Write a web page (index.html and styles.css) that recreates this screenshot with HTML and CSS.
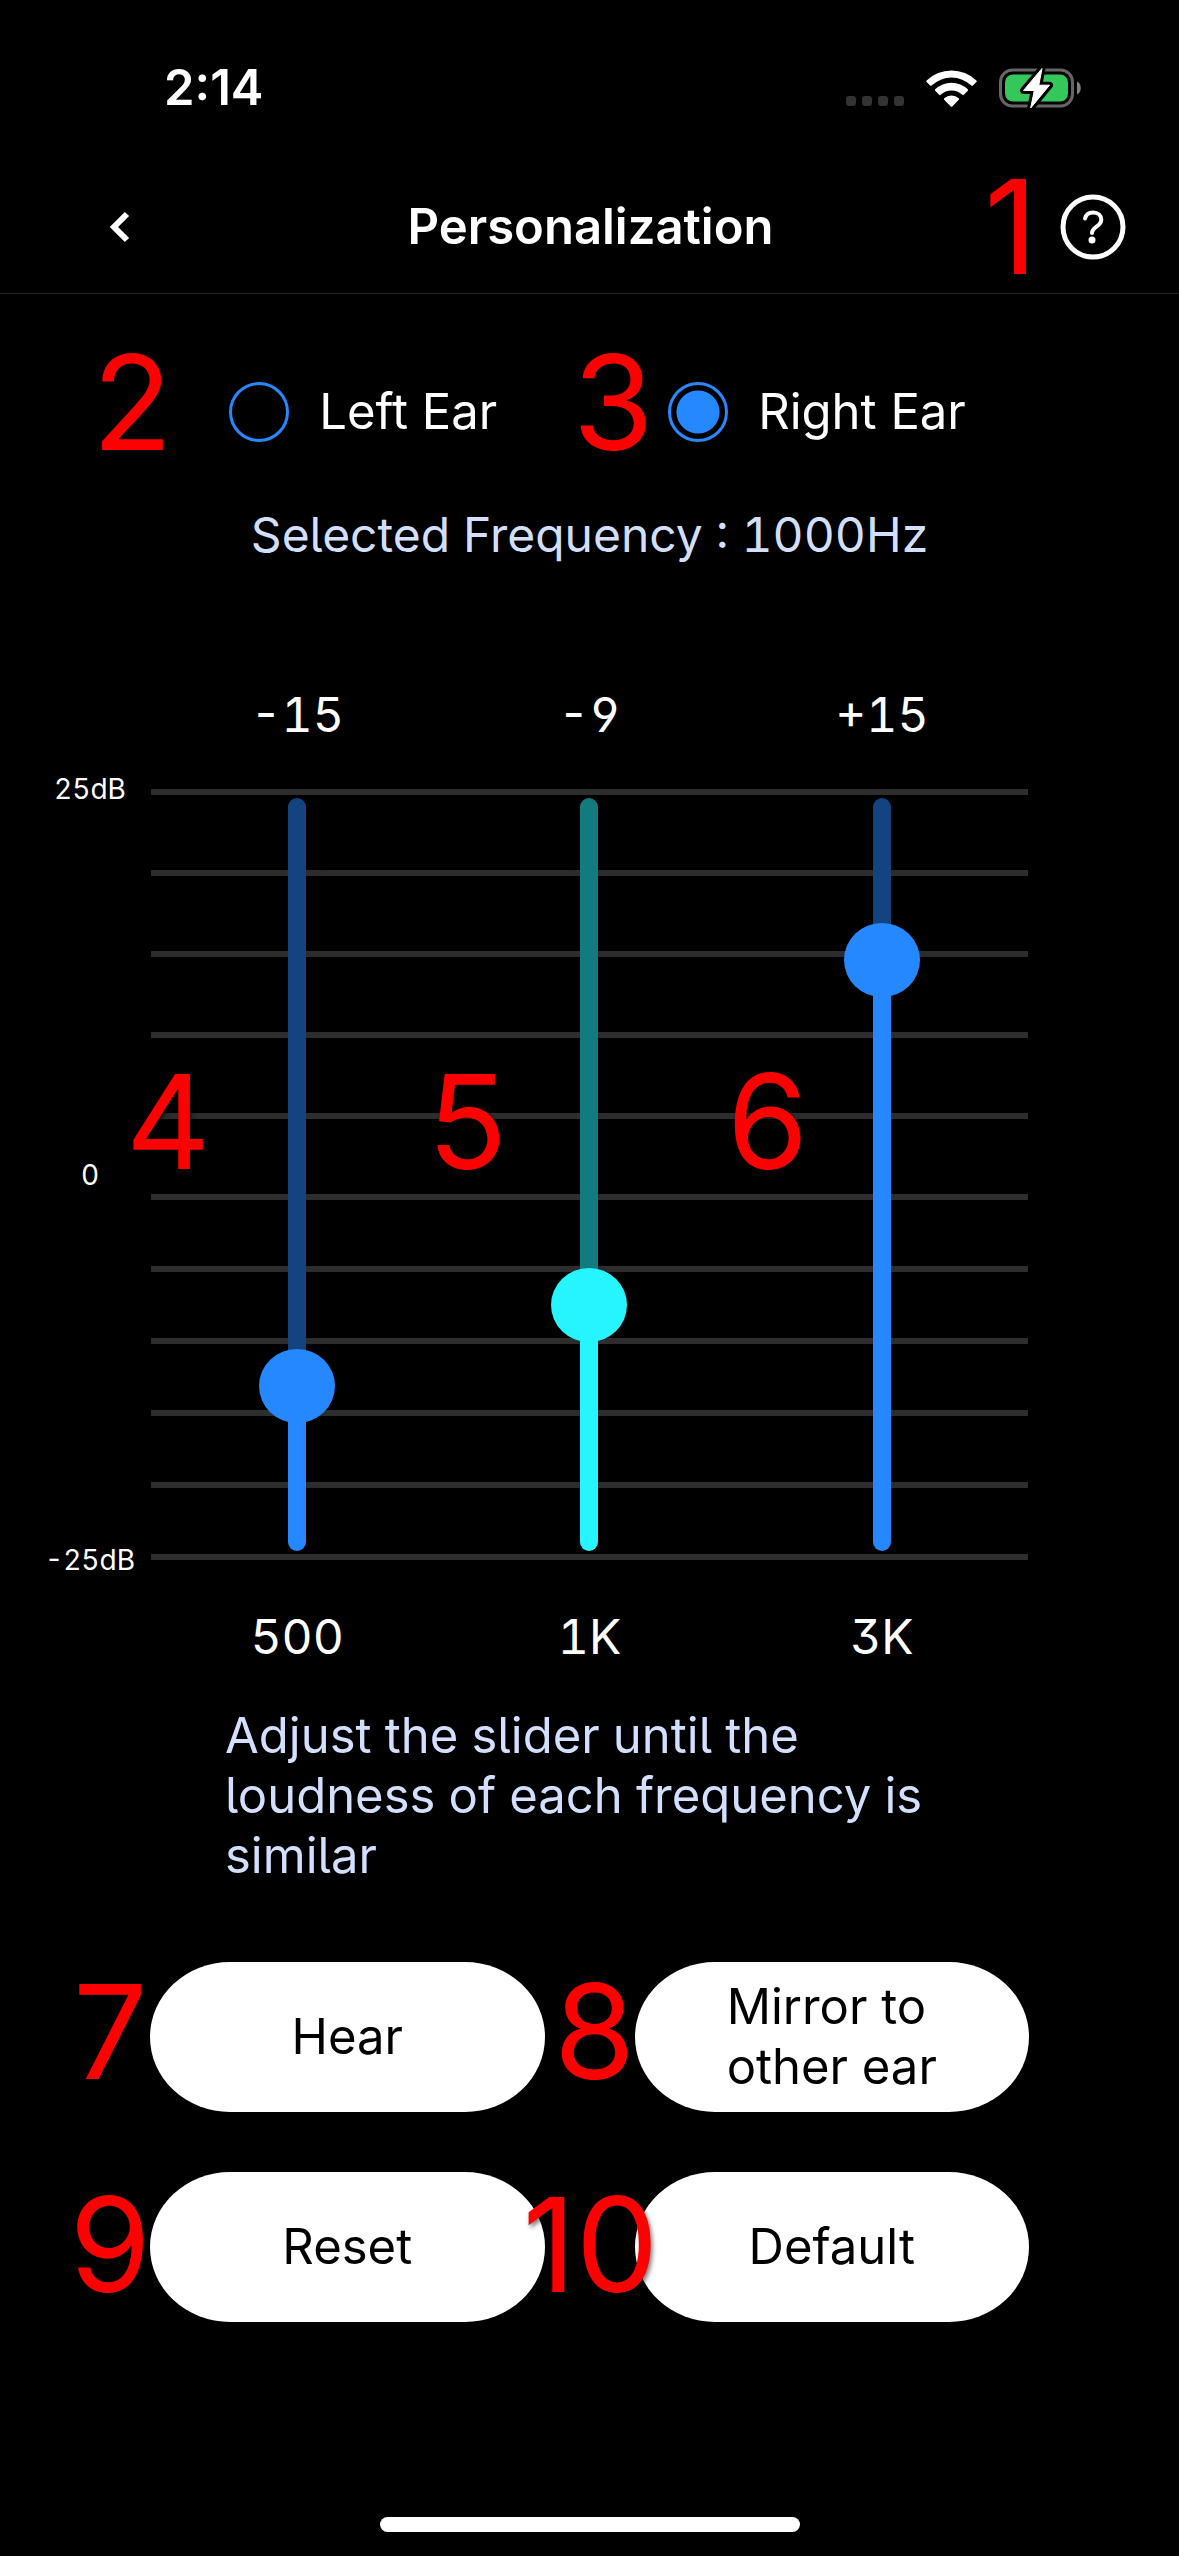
FILE: index.html
```html
<!DOCTYPE html>
<html lang="en">
<head>
<meta charset="utf-8">
<meta name="viewport" content="width=device-width, initial-scale=1">
<title>Personalization</title>
<link rel="stylesheet" href="styles.css">
</head>
<body>
<div class="status-bar">
  <time class="clock">2:14</time>
  <div class="status-icons">
    <svg class="signal" viewBox="0 0 58 10" aria-hidden="true">
      <rect width="10" height="10" rx="3"/><rect x="16" width="10" height="10" rx="3"/><rect x="32" width="10" height="10" rx="3"/><rect x="48" width="10" height="10" rx="3"/>
    </svg>
    <svg class="wifi" viewBox="0 0 51 38" aria-hidden="true">
      <path d="M0.6 11.6a35.6 35.6 0 0 1 49.8 0c.5.5.5 1 0 1.5L46.900 16.600c-.5.5-1 .5-1.500 0a28.700 28.700 0 0 0-39.800 0c-.5.5-1 .5-1.500 0L.6 13.100c-.5-.5-.5-1 0-1.500z"/>
      <path d="M9.200 20.300a23.500 23.500 0 0 1 32.600 0c.5.5.5 1 0 1.500l-4 4c-.5.5-1 .5-1.500 0a15.600 15.600 0 0 0-21.600 0c-.5.5-1 .5-1.500 0l-4-4c-.5-.5-.5-1 0-1.500z"/>
      <path d="M18.200 29.300a10.800 10.800 0 0 1 14.600 0c.5.5.5 1 0 1.500l-6.300 6.400c-.7.7-1.300.7-2 0l-6.300-6.400c-.5-.5-.5-1 0-1.500z"/>
    </svg>
    <svg class="battery" viewBox="0 0 82 43" aria-hidden="true">
      <rect x="1.500" y="3" width="72" height="36" rx="12" fill="none" stroke="#666" stroke-width="3"/>
      <path d="M78 14.500v13c5-1.500 5-11.500 0-13z" fill="#808080"/>
      <rect x="6" y="7.500" width="63" height="27" rx="8" fill="#34c759"/>
      <path d="M43 1.500 24.500 23.500h10.800L31.700 41 50.500 18.200H39.800z" fill="#fff" stroke="#000" stroke-width="7" stroke-linejoin="round"/>
      <path d="M43 1.500 24.500 23.500h10.800L31.700 41 50.500 18.200H39.800z" fill="#fff" stroke="#fff" stroke-width="1" stroke-linejoin="round"/>
    </svg>
  </div>
</div>

<header class="header">
  <button class="icon-button back" type="button" aria-label="Back">
    <svg class="chevron" viewBox="0 0 20 32" aria-hidden="true"><path d="M17 3 4 16l13 13"/></svg>
  </button>
  <h1 class="title">Personalization</h1>
  <button class="icon-button help" type="button" aria-label="Help">
    <svg class="question" viewBox="0 0 66 66" aria-hidden="true">
      <circle cx="33" cy="33" r="30"/>
      <path d="M25 24.500c1-4 4-6 8-6 5 0 8.300 3 8.300 7.200 0 6.800-9.300 7-9.300 13.300" stroke-width="4"/>
      <circle class="dot" cx="32" cy="46" r="3.500"/>
    </svg>
    <span class="marker marker-help">1</span>
  </button>
</header>

<main class="main">
  <div class="ears" role="radiogroup" aria-label="Ear">
    <label class="ear">
      <input class="radio" type="radio" name="ear" value="left">
      <span>Left Ear</span>
      <span class="marker marker-left">2</span>
    </label>
    <label class="ear">
      <input class="radio" type="radio" name="ear" value="right" checked>
      <span>Right Ear</span>
      <span class="marker marker-right">3</span>
    </label>
  </div>

  <p class="selected">Selected Frequency : 1000Hz</p>

  <section class="chart" aria-label="Loudness per frequency">
    <div class="axis"><span>25dB</span><span>0</span><span>-25dB</span></div>
    <div class="lines" aria-hidden="true">
      <i></i><i></i><i></i><i></i><i></i><i></i><i></i><i></i><i></i><i></i><i></i>
    </div>
    <div class="bands">
      <div class="band">
        <output for="band-500">-15</output>
        <div class="slider" style="--level: 22%">
          <div class="track"></div>
          <input class="range" id="band-500" type="range" min="-25" max="25" step="0.1" value="-14.9">
          <span class="marker marker-500">4</span>
        </div>
        <label class="frequency" for="band-500">500</label>
      </div>
      <div class="band active">
        <output for="band-1k">-9</output>
        <div class="slider" style="--level: 33%">
          <div class="track"></div>
          <input class="range" id="band-1k" type="range" min="-25" max="25" step="0.1" value="-9.2">
          <span class="marker marker-1k">5</span>
        </div>
        <label class="frequency" for="band-1k">1K</label>
      </div>
      <div class="band">
        <output for="band-3k">+15</output>
        <div class="slider" style="--level: 78%">
          <div class="track"></div>
          <input class="range" id="band-3k" type="range" min="-25" max="25" step="0.1" value="15.1">
          <span class="marker marker-3k">6</span>
        </div>
        <label class="frequency" for="band-3k">3K</label>
      </div>
    </div>
  </section>

  <p class="hint">Adjust the slider until the loudness of each frequency is similar</p>

  <div class="actions">
    <button class="action" type="button"><span>Hear</span><span class="marker marker-top">7</span></button>
    <button class="action" type="button"><span>Mirror to<br>other ear</span><span class="marker marker-top">8</span></button>
    <button class="action" type="button"><span>Reset</span><span class="marker marker-bottom">9</span></button>
    <button class="action" type="button"><span>Default</span><span class="marker marker-bottom wide">10</span></button>
  </div>
</main>

<div class="home-indicator"></div>
</body>
</html>
```
FILE: styles.css
```css
* { box-sizing: border-box; }

:root {
  --blue: #2688ff;
  --blue-dim: #13447f;
  --cyan: #26f5ff;
  --cyan-dim: #137a7f;
  --lilac: #d3dfff;
}

body {
  margin: 0;
  min-height: 100vh;
  display: flex;
  flex-direction: column;
  background: #000;
  color: #fff;
  font: 400 49px/60px Inter, "Liberation Sans", sans-serif;
}

button, input { font: inherit; color: inherit; margin: 0; }
p, h1 { margin: 0; }

.status-bar {
  height: 160px;
  padding: 16px 98px 0 164px;
  display: flex;
  align-items: center;
  justify-content: space-between;
}
.clock { font-size: 49px; font-weight: 600; }
.status-icons { display: flex; align-items: center; gap: 22px; }
.signal { width: 58px; height: 10px; fill: #333; align-self: flex-end; margin-bottom: 4px; }
.wifi { width: 51px; height: 38px; fill: #fff; }
.battery { width: 82px; height: 43px; }

.header {
  height: 134px;
  padding: 0 53px 0 90px;
  display: grid;
  grid-template-columns: 66px 1fr 66px;
  align-items: center;
  border-bottom: 1px solid #262626;
}
.title { font-size: 49px; line-height: 60px; font-weight: 600; text-align: center; padding-right: 35px; }
.icon-button {
  position: relative;
  width: 66px;
  height: 66px;
  padding: 0;
  border: 0;
  background: none;
  display: grid;
  place-items: center;
}
.chevron { width: 20px; height: 32px; fill: none; stroke: #fff; stroke-width: 6; }
.back { justify-items: start; padding-left: 20px; }
.question { width: 66px; height: 66px; fill: none; stroke: #fff; stroke-width: 5; stroke-linecap: round; }
.question .dot { fill: #fff; stroke: none; }

.main { display: flex; flex-direction: column; }

.ears {
  margin-top: 88px;
  padding-left: 16px;
  display: flex;
  justify-content: center;
  gap: 171px;
}
.ear { position: relative; display: flex; align-items: center; gap: 30px; }
.radio {
  appearance: none;
  width: 60px;
  height: 60px;
  border: 3px solid var(--blue);
  border-radius: 50%;
}
.radio:checked { background: radial-gradient(circle, var(--blue) 21px, transparent 22px); }

/* Tailed l, straight-legged 9 and flat-topped 3 */
.selected, .chart, .hint { font-feature-settings: "cv05", "cv04", "cv09", "tnum"; }
.selected, .chart { font-size: 48px; }

.selected { margin-top: 63px; text-align: center; color: var(--lilac); }

.chart {
  margin-top: 120px;
  display: grid;
  grid-template-columns: 151px 1fr 151px;
  grid-template-rows: 60px 807px 66px;
  row-gap: 26px;
}
.axis {
  grid-area: 2 / 1;
  padding-left: 29px;
  display: flex;
  flex-direction: column;
  justify-content: space-between;
  align-items: center;
  font-size: 28px;
  line-height: 36px;
}
.lines {
  grid-area: 2 / 2;
  padding: 18px 0;
  display: grid;
  grid-template-rows: repeat(5, 81px) repeat(5, 72px) 6px;
}
.lines i { height: 6px; background: #2d2d2d; }
.bands {
  grid-area: 1 / 2 / 4 / 3;
  display: grid;
  grid-template-columns: repeat(3, 1fr);
  text-align: center;
}
.band { display: flex; flex-direction: column; gap: 26px; --on: var(--blue); --off: var(--blue-dim); }
.band.active { --on: var(--cyan); --off: var(--cyan-dim); }
.frequency { line-height: 66px; }
.slider { position: relative; height: 807px; display: grid; place-items: center; }
.track {
  grid-area: 1 / 1;
  width: 18px;
  height: 753px;
  border-radius: 9px;
  background: linear-gradient(to top, var(--on) var(--level), var(--off) 0);
}
.range {
  grid-area: 1 / 1;
  appearance: none;
  writing-mode: vertical-lr;
  direction: rtl;
  width: 76px;
  height: 784px;
  background: none;
}
.range::-webkit-slider-thumb {
  appearance: none;
  width: 76px;
  height: 74px;
  border-radius: 50%;
  background: var(--on);
}

.hint { margin: 36px 225px 0; color: var(--lilac); }

.actions {
  margin: 76px 150px 60px;
  display: grid;
  grid-template-columns: 1fr 1fr;
  gap: 60px 90px;
}
.action {
  position: relative;
  height: 150px;
  padding: 0;
  border: 0;
  border-radius: 80px / 75px;
  background: #fff;
  color: #000;
  display: grid;
  place-items: center;
  text-align: left;
}

/* Numbered callouts beside each control */
.marker {
  position: absolute;
  top: 50%;
  transform: translate(-50%, -50%);
  color: #f00;
  font-size: 131px;
  line-height: 132px;
  font-feature-settings: normal;
  text-shadow: 2px 3px 4px rgb(0 0 0 / 50%);
  pointer-events: none;
}
.marker-help { left: -49px; }
.marker-left, .marker-right { top: 21px; }
.marker-left { left: -97px; }
.marker-right { left: -55px; }
.marker-500, .marker-1k, .marker-3k { top: 351px; }
.marker-500 { left: 17px; }
.marker-1k { left: 24px; }
.marker-3k { left: 32px; }
.marker-top, .marker-bottom { left: -40px; }
.marker-top { top: 70px; }
.marker-bottom { top: 73px; }
.marker.wide { left: -44px; }

.home-indicator {
  width: 420px;
  height: 15px;
  margin: auto auto 24px;
  border-radius: 8px;
  background: #fff;
}
```
